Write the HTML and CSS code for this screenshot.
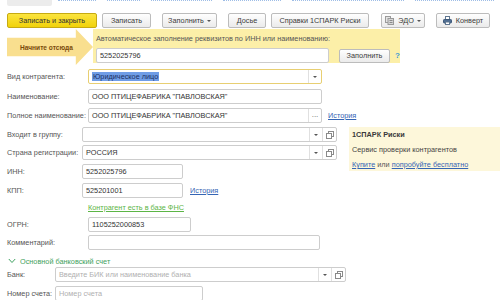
FILE: index.html
```html
<!DOCTYPE html>
<html lang="ru">
<head>
<meta charset="utf-8">
<title>Контрагент</title>
<link rel="stylesheet" href="styles.css">
</head>
<body>
<div class="top">
  <div class="tab-stub"></div>
  <div class="stubs">
    <span class="stub s1"></span>
    <span class="stub s2"></span>
    <span class="stub s3"></span>
    <span class="stub s4"></span>
    <span class="stub s5"></span>
    <span class="stub s6"></span>
  </div>
</div>

<div class="toolbar">
  <div class="btn btn-main w-save-close">Записать и закрыть</div>
  <div class="btn w-save ml5">Записать</div>
  <div class="btn w-fill ml11">Заполнить <span class="caret"></span></div>
  <div class="btn w-dossier ml11">Досье</div>
  <div class="btn w-spark ml5">Справки 1СПАРК Риски</div>
  <div class="btn w-edo ml12">
    <svg class="ico" width="9" height="9" viewBox="0 0 9 9"><rect x="0.5" y="0.5" width="5" height="6" fill="#e4e4e4" stroke="#9a9a9a"/><rect x="3" y="2.5" width="5.5" height="6" fill="#d6d6d6" stroke="#9a9a9a"/><line x1="4.5" y1="4.5" x2="7.5" y2="4.5" stroke="#8a8a8a"/><line x1="4.5" y1="6.5" x2="7.5" y2="6.5" stroke="#8a8a8a"/></svg>
    ЭДО <span class="caret"></span>
  </div>
  <div class="btn w-env ml11">
    <svg class="ico" width="9" height="9" viewBox="0 0 9 9"><rect x="2.5" y="0.5" width="4" height="3" fill="#fff" stroke="#5f7690"/><rect x="0.5" y="3.5" width="8" height="3.5" rx="0.8" fill="#4f6d92" stroke="#3d5878"/><rect x="2.5" y="6" width="4" height="2.5" fill="#fff" stroke="#5f7690"/></svg>
    Конверт
  </div>
</div>

<div class="start">
  <div class="arrow"><span>Начните отсюда</span></div>
  <div class="auto">
    <div class="auto-title">Автоматическое заполнение реквизитов по ИНН или наименованию:</div>
    <div class="auto-row">
      <div class="field auto-input">5252025796</div>
      <div class="btn w-auto-fill">Заполнить</div>
      <span class="help">?</span>
    </div>
  </div>
</div>

<div class="form">
  <div class="row r-kind">
    <label class="lbl w81">Вид контрагента:</label>
    <div class="field focus w234">
      <span class="val"><span class="sel">Юридическое лицо</span></span>
      <span class="dd"><span class="caret"></span></span>
    </div>
  </div>
  <div class="row mt5">
    <label class="lbl w81">Наименование:</label>
    <div class="field w234"><span class="val">ООО ПТИЦЕФАБРИКА "ПАВЛОВСКАЯ"</span></div>
  </div>
  <div class="row mt4">
    <label class="lbl w81">Полное наименование:</label>
    <div class="field w234">
      <span class="val">ООО ПТИЦЕФАБРИКА "ПАВЛОВСКАЯ"</span>
      <span class="dd dots">...</span>
    </div>
    <a class="link ml6">История</a>
  </div>

  <div class="split">
    <div class="left">
      <div class="row">
        <label class="lbl w75">Входит в группу:</label>
        <div class="field w255">
          <span class="val"></span>
          <span class="dd"><span class="caret"></span></span>
          <span class="dd open"><svg width="8" height="8" viewBox="0 0 8 8"><rect x="2.5" y="0.5" width="5" height="5" fill="none" stroke="#8a8a8a"/><rect x="0.5" y="2.5" width="5" height="5" fill="#fff" stroke="#8a8a8a"/></svg></span>
        </div>
      </div>
      <div class="row mt3">
        <label class="lbl w75">Страна регистрации:</label>
        <div class="field w255">
          <span class="val">РОССИЯ</span>
          <span class="dd"><span class="caret"></span></span>
          <span class="dd open"><svg width="8" height="8" viewBox="0 0 8 8"><rect x="2.5" y="0.5" width="5" height="5" fill="none" stroke="#8a8a8a"/><rect x="0.5" y="2.5" width="5" height="5" fill="#fff" stroke="#8a8a8a"/></svg></span>
        </div>
      </div>
      <div class="row mt4">
        <label class="lbl w75">ИНН:</label>
        <div class="field w101"><span class="val">5252025796</span></div>
      </div>
      <div class="row mt4">
        <label class="lbl w75">КПП:</label>
        <div class="field w101"><span class="val">525201001</span></div>
        <a class="link ml7">История</a>
      </div>
      <div class="fns-row">
        <a class="fns">Контрагент есть в базе ФНС</a>
      </div>
      <div class="row mt5">
        <label class="lbl w81">ОГРН:</label>
        <div class="field w103"><span class="val">1105252000853</span></div>
      </div>
      <div class="row mt3">
        <label class="lbl w81">Комментарий:</label>
        <div class="field w232"><span class="val"></span></div>
      </div>
      <div class="section">
        <svg width="8" height="6" viewBox="0 0 8 6"><polyline points="0.8,1 4,4.5 7.2,1" fill="none" stroke="#3fa160" stroke-width="1"/></svg>
        <span>Основной банковский счет</span>
      </div>
      <div class="row">
        <label class="lbl w48">Банк:</label>
        <div class="field w291">
          <span class="val ph">Введите БИК или наименование банка</span>
          <span class="dd"><span class="caret"></span></span>
          <span class="dd open"><svg width="8" height="8" viewBox="0 0 8 8"><rect x="2.5" y="0.5" width="5" height="5" fill="none" stroke="#8a8a8a"/><rect x="0.5" y="2.5" width="5" height="5" fill="#fff" stroke="#8a8a8a"/></svg></span>
        </div>
      </div>
      <div class="row mt4">
        <label class="lbl w48">Номер счета:</label>
        <div class="field w148"><span class="val ph">Номер счета</span></div>
      </div>
    </div>

    <div class="spark">
      <div class="spark-title">1СПАРК Риски</div>
      <div class="spark-text">Сервис проверки контрагентов</div>
      <div class="spark-links"><a class="link">Купите</a> или <a class="link">попробуйте бесплатно</a></div>
    </div>
  </div>
</div>
</body>
</html>
```

FILE: styles.css
```css
* { box-sizing: border-box; margin: 0; padding: 0; }

body {
  margin: 0;
  width: 500px;
  height: 300px;
  overflow: hidden;
  background: #fff;
  font-family: "Liberation Sans", Arial, sans-serif;
  font-size: 7.3px;
  color: #4a4a4a;
}

/* cut-off top strip */
.top { display: flex; height: 6px; padding-left: 7px; gap: 6px; align-items: flex-start; }
.tab-stub { width: 45px; height: 6px; background: #ececec; border-radius: 0 0 2px 2px; }
.stubs { display: flex; gap: 11px; }
.stub { display: block; height: 1px; border-top: 1px dotted #9ebde6; }
.s1 { width: 38px; }
.s2 { width: 33px; }
.s3 { width: 61px; }
.s4 { width: 58px; }
.s5 { width: 112px; }
.s6 { width: 79px; }

/* toolbar */
.toolbar { display: flex; margin-top: 7px; padding-left: 7px; height: 15px; }
.btn {
  height: 15px;
  display: flex;
  align-items: center;
  justify-content: center;
  gap: 3px;
  border: 1px solid #bcbcbc;
  border-radius: 2px;
  background: linear-gradient(#fefefe, #ebebeb);
  color: #3c3c3c;
  white-space: nowrap;
}
.btn-main { background: linear-gradient(#fbe43f, #f1d20a); border-color: #c6aa12; color: #333; }
.w-save-close { width: 90px; }
.w-save { width: 49px; }
.w-fill { width: 55px; }
.w-dossier { width: 38px; }
.w-spark { width: 98px; }
.w-edo { width: 44px; }
.w-env { width: 54px; }
.ml5 { margin-left: 5px; }
.ml6 { margin-left: 6px; }
.ml7 { margin-left: 7px; }
.ml11 { margin-left: 11px; }
.ml12 { margin-left: 12px; }
.ico { flex: none; margin-right: 1px; }

.caret {
  display: inline-block;
  width: 0; height: 0;
  border-left: 2px solid transparent;
  border-right: 2px solid transparent;
  border-top: 2px solid #555;
}

/* start block */
.start { display: flex; margin-top: 1px; padding-left: 7px; height: 34px; }
.arrow {
  width: 86px;
  height: 36px;
  background: #f9df8f;
  clip-path: polygon(0 24%, 80% 24%, 80% 0, 100% 50%, 80% 100%, 80% 76%, 0 76%);
  display: flex;
  align-items: center;
  padding-left: 13px;
}
.arrow span { font-weight: bold; font-size: 6.6px; color: #7a4b0c; }
.auto {
  width: 307px;
  height: 34px;
  background: #fcefa8;
  padding: 5px 0 0 3px;
}
.auto-title { height: 10px; line-height: 10px; color: #555; }
.auto-row { display: flex; align-items: center; margin-top: 4px; }
.auto-input { width: 233px; height: 14px; }
.w-auto-fill { width: 51px; height: 14px; margin-left: 10px; }
.help { margin-left: 5px; font-weight: bold; color: #3d9bd5; font-size: 8px; }

/* form */
.form { padding-left: 7px; margin-top: 6px; }
.row { display: flex; align-items: center; height: 15px; }
.mt3 { margin-top: 3px; }
.mt4 { margin-top: 4px; }
.mt5 { margin-top: 5px; }
.lbl { flex: none; color: #555; white-space: nowrap; }
.w48 { width: 48px; }
.w75 { width: 75px; }
.w81 { width: 81px; }

.field {
  flex: none;
  height: 15px;
  display: flex;
  align-items: stretch;
  border: 1px solid #cdcdcd;
  border-radius: 2px;
  background: #fff;
  color: #333;
}
.field.focus { border-color: #e8cf72; }
.auto-input { padding-left: 3px; align-items: center; }
.val { flex: 1; display: flex; align-items: center; padding-left: 3px; white-space: nowrap; overflow: hidden; }
.ph { color: #b0b0b0; }
.sel { background: #6f9de6; color: #1b2e63; padding: 0 1px; }
.dd { flex: none; width: 13px; border-left: 1px solid #e0e0e0; display: flex; align-items: center; justify-content: center; }
.dd.open { width: 14px; }
.dots { color: #666; font-size: 8px; line-height: 8px; align-items: flex-start; padding-top: 2px; }
.w101 { width: 101px; }
.w103 { width: 103px; }
.w148 { width: 148px; }
.w232 { width: 232px; }
.w234 { width: 234px; }
.w255 { width: 255px; }
.w291 { width: 291px; }

.link { color: #3565b4; text-decoration: underline; cursor: pointer; }

/* split: form rows + spark panel */
.split { display: flex; margin-top: 4px; align-items: flex-start; }
.left { width: 341px; flex: none; }
.fns-row { height: 10px; margin-top: 4px; padding-left: 81px; display: flex; align-items: center; }
.fns { color: #5cb546; text-decoration: underline; }
.section { height: 12px; margin: 5px 0 0 1px; display: flex; align-items: center; gap: 4px; color: #3fa160; }

.spark {
  flex: 1;
  margin-left: 1px;
  height: 44px;
  background: #fdf7da;
  padding: 2px 0 0 3px;
  color: #444;
}
.spark-title { font-weight: bold; height: 10px; line-height: 10px; margin-top: 1px; color: #3a3a3a; }
.spark-text { height: 10px; line-height: 10px; margin-top: 5px; }
.spark-links { height: 10px; line-height: 10px; margin-top: 5px; color: #555; }
```
